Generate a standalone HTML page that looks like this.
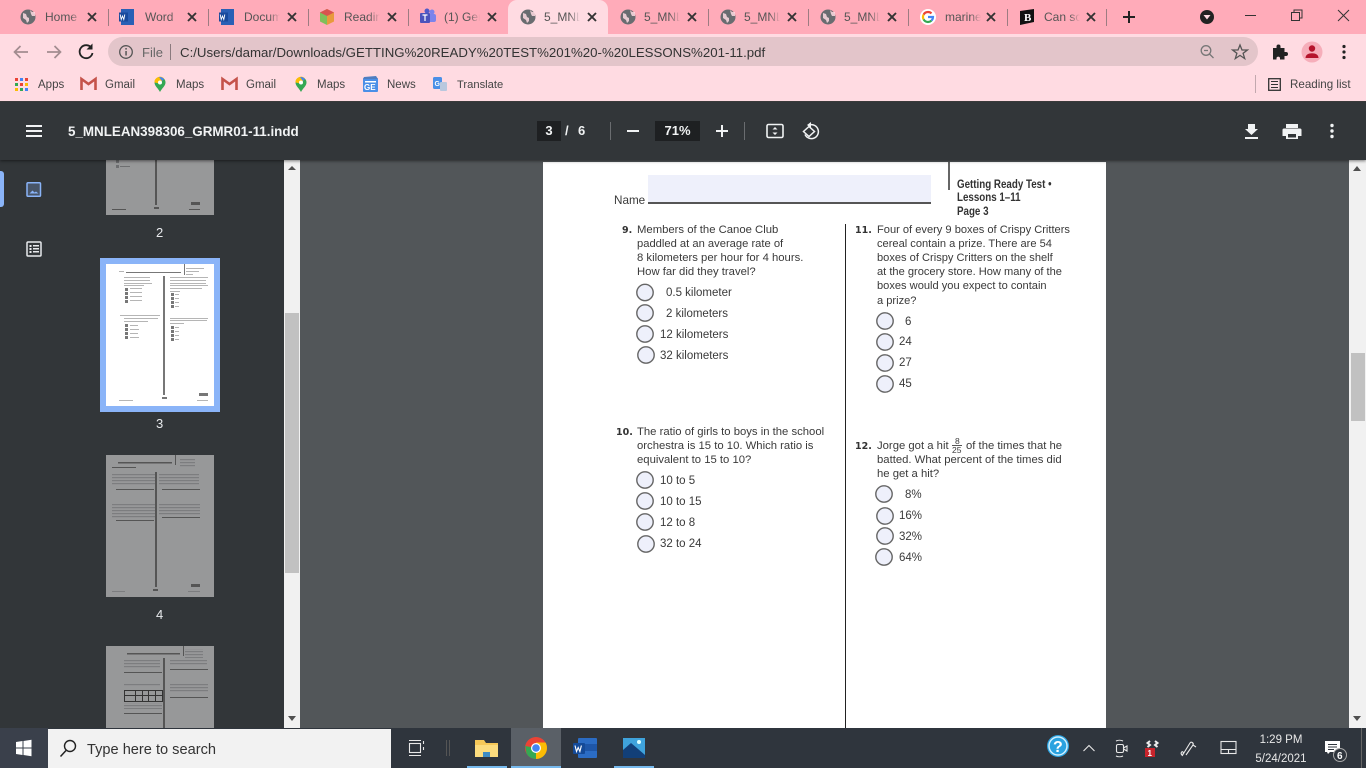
<!DOCTYPE html>
<html><head><meta charset="utf-8"><style>
html,body{margin:0;padding:0;width:1366px;height:768px;overflow:hidden;background:#525659;font-family:"Liberation Sans",sans-serif}
.b{position:absolute}
.t{position:absolute;white-space:nowrap;line-height:14px;height:14px}
.tab{font-size:12px;color:#555;line-height:16px;height:16px;top:9px;width:36px;overflow:hidden;-webkit-mask-image:linear-gradient(90deg,#000 70%,transparent 100%)}
.bm{font-size:11.5px;color:#444;top:78px}
.p{font-size:11.3px;color:#3a3a3a}
.r{font-size:11.1px}
.o{font-size:11.5px}
.h{font-size:11.5px;font-weight:bold;color:#333;transform:scaleX(.85);transform-origin:left}
.n{font-family:"DejaVu Sans",sans-serif;font-weight:bold;font-size:9.5px;color:#333}
svg{position:absolute;overflow:visible}
</style></head><body>
<!-- main page -->
<div class="b" style="left:543px;top:162px;width:563px;height:568px;background:#fff"></div>
<div class="b" style="left:648px;top:175px;width:283px;height:28px;background:#eef0fb"></div>
<div class="b" style="left:648px;top:202px;width:283px;height:1.500px;background:#555"></div>
<div class="b" style="left:948px;top:162px;width:2px;height:28px;background:#666"></div>
<div class="b" style="left:845px;top:224px;width:1px;height:506px;background:#222"></div>
<div class="t p" style="left:614px;top:194px;font-size:11.7px">Name</div>
<div class="t h" style="left:957px;top:178px">Getting Ready Test •</div>
<div class="t h" style="left:957px;top:191px">Lessons 1–11</div>
<div class="t h" style="left:957px;top:205px">Page 3</div>

<div class="t n" style="left:622px;top:224px">9.</div>
<div class="t p" style="left:637px;top:223px">Members of the Canoe Club</div>
<div class="t p" style="left:637px;top:237px;font-size:11.2px">paddled at an average rate of</div>
<div class="t p" style="left:637px;top:251px">8 kilometers per hour for 4 hours.</div>
<div class="t p" style="left:637px;top:265px">How far did they travel?</div>
<div class="t p o" style="left:666px;top:286px">0.5 kilometer</div>
<div class="t p o" style="left:666px;top:307px">2 kilometers</div>
<div class="t p o" style="left:660px;top:328px">12 kilometers</div>
<div class="t p o" style="left:660px;top:349px">32 kilometers</div>

<div class="t n" style="left:855px;top:224px">11.</div>
<div class="t p r" style="left:877px;top:223px">Four of every 9 boxes of Crispy Critters</div>
<div class="t p r" style="left:877px;top:237px">cereal contain a prize. There are 54</div>
<div class="t p r" style="left:877px;top:251px">boxes of Crispy Critters on the shelf</div>
<div class="t p r" style="left:877px;top:265px">at the grocery store. How many of the</div>
<div class="t p r" style="left:877px;top:279px">boxes would you expect to contain</div>
<div class="t p r" style="left:877px;top:294px">a prize?</div>
<div class="t p o" style="left:905px;top:315px">6</div>
<div class="t p o" style="left:899px;top:335px">24</div>
<div class="t p o" style="left:899px;top:356px">27</div>
<div class="t p o" style="left:899px;top:377px">45</div>

<div class="t n" style="left:616px;top:426px">10.</div>
<div class="t p" style="left:637px;top:425px">The ratio of girls to boys in the school</div>
<div class="t p" style="left:637px;top:439px">orchestra is 15 to 10. Which ratio is</div>
<div class="t p" style="left:637px;top:453px">equivalent to 15 to 10?</div>
<div class="t p o" style="left:660px;top:474px">10 to 5</div>
<div class="t p o" style="left:660px;top:495px">10 to 15</div>
<div class="t p o" style="left:660px;top:516px">12 to 8</div>
<div class="t p o" style="left:660px;top:537px">32 to 24</div>

<div class="t n" style="left:855px;top:440px">12.</div>
<div class="t p" style="left:877px;top:439px">Jorge got a hit</div>
<div class="t p" style="left:955px;top:434px;font-size:8.5px">8</div>
<div class="b" style="left:952px;top:445px;width:10px;height:1px;background:#555"></div>
<div class="t p" style="left:952px;top:443px;font-size:8.5px">25</div>
<div class="t p" style="left:966px;top:439px">of the times that he</div>
<div class="t p" style="left:877px;top:453px">batted. What percent of the times did</div>
<div class="t p" style="left:877px;top:467px">he get a hit?</div>
<div class="t p o" style="left:905px;top:488px">8%</div>
<div class="t p o" style="left:899px;top:509px">16%</div>
<div class="t p o" style="left:899px;top:530px">32%</div>
<div class="t p o" style="left:899px;top:551px">64%</div>

<svg style="left:0;top:0" width="1366" height="768" fill="#eef0fb" stroke="#666" stroke-width="1.400">
<circle cx="645" cy="292.500" r="8.200"/><circle cx="645" cy="313" r="8.200"/><circle cx="645" cy="334" r="8.200"/><circle cx="646" cy="355" r="8.200"/>
<circle cx="645" cy="480" r="8.200"/><circle cx="645" cy="501" r="8.200"/><circle cx="645" cy="522" r="8.200"/><circle cx="646" cy="544" r="8.200"/>
<circle cx="885" cy="321" r="8.200"/><circle cx="885" cy="342" r="8.200"/><circle cx="885" cy="363" r="8.200"/><circle cx="885" cy="384" r="8.200"/>
<circle cx="884" cy="494" r="8.200"/><circle cx="885" cy="516" r="8.200"/><circle cx="885" cy="536" r="8.200"/><circle cx="884" cy="557" r="8.200"/>
</svg>

<!-- right scrollbar -->
<div class="b" style="left:1349px;top:160px;width:17px;height:570px;background:#f1f1f1"></div>
<div class="b" style="left:1351px;top:353px;width:14px;height:68px;background:#c1c1c1"></div>
<svg style="left:0;top:0" width="1366" height="768" fill="#505050"><path d="M1353 171l4-5 4 5zM1353 716l4 5 4-5z"/></svg>

<!-- sidebar -->
<div class="b" style="left:0;top:160px;width:284px;height:570px;background:#323639"></div>
<div class="b" style="left:0;top:171px;width:4px;height:36px;background:#8ab4f8;border-radius:0 3px 3px 0"></div>
<div class="b" style="left:284px;top:160px;width:16px;height:570px;background:#f1f1f1"></div>
<div class="b" style="left:285px;top:313px;width:14px;height:260px;background:#c1c1c1"></div>
<svg style="left:0;top:0" width="1366" height="768" fill="#505050"><path d="M288 170l4-4 4 4zM288 716l4 5 4-5z"/></svg>
<div class="b" style="left:106px;top:150px;width:108px;height:65px;background:#979899"></div>
<div class="b" style="left:100px;top:258px;width:108px;height:142px;background:#fff;border:6px solid #8ab4f8"></div>
<div class="b" style="left:106px;top:455px;width:108px;height:142px;background:#979899"></div>
<div class="b" style="left:106px;top:646px;width:108px;height:90px;background:#979899"></div>
<div class="t" style="left:156px;top:226px;font-size:13px;color:#e8eaed">2</div>
<div class="t" style="left:156px;top:417px;font-size:13px;color:#e8eaed">3</div>
<div class="t" style="left:156px;top:608px;font-size:13px;color:#e8eaed">4</div>

<svg style="left:0;top:0" width="1366" height="768">
<defs><pattern id="ln" width="4" height="3" patternUnits="userSpaceOnUse"><rect width="4" height="1.200" fill="#7c7d7f"/></pattern></defs>
<!-- thumb 2 -->
<g fill="#555"><rect x="155" y="160" width="2" height="45"/><rect x="191" y="202" width="9" height="3"/><rect x="112" y="209" width="14" height="1"/><rect x="154" y="207" width="5" height="2"/><rect x="189" y="209" width="11" height="1"/></g>
<g fill="#6d6e70"><rect x="116" y="160" width="3" height="3"/><rect x="116" y="165" width="3" height="3"/><rect x="120" y="166" width="10" height="1"/></g>
<!-- thumb 3 -->
<g fill="#b5b5b5">
<rect x="124" y="277" width="26" height="1"/><rect x="124" y="280" width="26" height="1"/><rect x="124" y="283" width="28" height="1"/><rect x="124" y="285" width="20" height="1"/>
<rect x="130" y="288" width="12" height="1"/><rect x="130" y="292" width="12" height="1"/><rect x="130" y="296" width="12" height="1"/><rect x="130" y="300" width="12" height="1"/>
<rect x="170" y="277" width="38" height="1"/><rect x="170" y="280" width="36" height="1"/><rect x="170" y="283" width="36" height="1"/><rect x="170" y="285" width="38" height="1"/><rect x="170" y="288" width="32" height="1"/><rect x="170" y="291" width="10" height="1"/>
<rect x="175" y="294" width="4" height="1"/><rect x="175" y="298" width="4" height="1"/><rect x="175" y="302" width="4" height="1"/><rect x="175" y="306" width="4" height="1"/>
<rect x="120" y="315" width="40" height="1"/><rect x="124" y="318" width="34" height="1"/><rect x="124" y="321" width="24" height="1"/>
<rect x="130" y="325" width="8" height="1"/><rect x="130" y="329" width="9" height="1"/><rect x="130" y="333" width="8" height="1"/><rect x="130" y="337" width="9" height="1"/>
<rect x="170" y="318" width="38" height="1"/><rect x="170" y="320" width="37" height="1"/><rect x="170" y="323" width="14" height="1"/>
<rect x="175" y="327" width="4" height="1"/><rect x="175" y="331" width="4" height="1"/><rect x="175" y="335" width="4" height="1"/><rect x="175" y="339" width="4" height="1"/>
<rect x="186" y="268" width="18" height="1"/><rect x="186" y="271" width="13" height="1"/><rect x="186" y="274" width="7" height="1"/>
<rect x="119" y="271" width="5" height="1"/><rect x="119" y="400" width="14" height="1"/><rect x="197" y="400" width="11" height="1"/>
</g>
<g fill="#777"><rect x="126" y="272" width="55" height="1"/><rect x="184" y="264" width="1" height="11"/><rect x="163" y="276" width="2" height="119"/><rect x="199" y="393" width="9" height="3"/><rect x="162" y="397" width="5" height="2"/>
<rect x="125" y="288" width="3" height="3"/><rect x="125" y="292" width="3" height="3"/><rect x="125" y="296" width="3" height="3"/><rect x="125" y="300" width="3" height="3"/>
<rect x="171" y="293" width="3" height="3"/><rect x="171" y="297" width="3" height="3"/><rect x="171" y="301" width="3" height="3"/><rect x="171" y="305" width="3" height="3"/>
<rect x="125" y="324" width="3" height="3"/><rect x="125" y="328" width="3" height="3"/><rect x="125" y="332" width="3" height="3"/><rect x="125" y="336" width="3" height="3"/>
<rect x="171" y="326" width="3" height="3"/><rect x="171" y="330" width="3" height="3"/><rect x="171" y="334" width="3" height="3"/><rect x="171" y="338" width="3" height="3"/></g>
<!-- thumb 4 -->
<g fill="url(#ln)">
<rect x="112" y="473" width="43" height="12"/><rect x="159" y="473" width="40" height="12"/>
<rect x="112" y="503" width="43" height="15"/><rect x="159" y="503" width="41" height="12"/>
<rect x="180" y="458" width="15" height="9"/>
<rect x="112" y="591" width="13" height="1"/><rect x="188" y="591" width="12" height="1"/>
</g>
<g fill="#555"><rect x="118" y="462" width="54" height="1.500"/><rect x="175" y="455" width="1" height="10"/><rect x="112" y="467" width="24" height="1"/><rect x="116" y="489" width="38" height="1"/><rect x="162" y="489" width="38" height="1"/><rect x="116" y="520" width="38" height="1"/><rect x="162" y="517" width="38" height="1"/><rect x="155" y="472" width="2" height="115"/><rect x="191" y="584" width="9" height="3"/><rect x="153" y="589" width="5" height="2"/></g>
<!-- thumb 5 -->
<g fill="url(#ln)"><rect x="124" y="660" width="36" height="9"/><rect x="170" y="660" width="37" height="6"/><rect x="124" y="684" width="36" height="3"/><rect x="170" y="684" width="38" height="9"/><rect x="124" y="703" width="38" height="6"/><rect x="185" y="649" width="18" height="9"/></g>
<g fill="#555"><rect x="127" y="653" width="53" height="1.500"/><rect x="183" y="646" width="1" height="10"/><rect x="124" y="672" width="38" height="1"/><rect x="170" y="669" width="38" height="1"/><rect x="124" y="713" width="38" height="1"/><rect x="170" y="697" width="38" height="1"/><rect x="163" y="658" width="2" height="70"/></g>
<g fill="none" stroke="#333"><rect x="124.500" y="690.500" width="38" height="11"/><path d="M135.500 690v11M142.500 690v11M148.500 690v11M155.500 690v11M124 695.500h39"/></g>
<!-- sidebar icons -->
<g fill="none" stroke="#8ab4f8" stroke-width="1.500"><rect x="27" y="182.700" width="13.500" height="13.500" rx="1"/></g>
<path d="M29.500 193.500l3-3 2 2 1.500-1 2.500 2z" fill="#8ab4f8"/><rect x="27" y="183" width="13.500" height="13" fill="#8ab4f8" opacity=".25"/>
<g fill="none" stroke="#e8eaed" stroke-width="1.500"><rect x="27" y="242" width="14" height="14" rx="1"/></g>
<g fill="#e8eaed"><rect x="29.500" y="245" width="2" height="2"/><rect x="29.500" y="248" width="2" height="2"/><rect x="29.500" y="251" width="2" height="2"/><rect x="33" y="245" width="6" height="1.500"/><rect x="33" y="248" width="6" height="1.500"/><rect x="33" y="251" width="6" height="1.500"/></g>
</svg>

<!-- PDF toolbar -->
<div class="b" style="left:0;top:102px;width:1366px;height:58px;background:#323639;box-shadow:0 1px 3px rgba(0,0,0,.5)"></div>
<svg style="left:0;top:0" width="1366" height="768">
<g fill="#f1f3f4"><rect x="26" y="125" width="16" height="2"/><rect x="26" y="130" width="16" height="2"/><rect x="26" y="135" width="16" height="2"/></g>
<g fill="#6a6d70"><rect x="610" y="122" width="1" height="18"/><rect x="744" y="122" width="1" height="18"/></g>
<g fill="#f1f3f4"><rect x="627" y="130" width="12" height="2"/><rect x="716" y="130" width="12" height="2"/><rect x="721" y="125" width="2" height="12"/></g>
<rect x="767" y="124.500" width="16" height="13" rx="1.500" fill="none" stroke="#f1f3f4" stroke-width="1.600"/>
<path d="M775 127l-2.500 2.500h5zM775 135l-2.500-2.500h5z" fill="#f1f3f4"/>
<path d="M808 125.500a7 7 0 1 1-3 9" fill="none" stroke="#f1f3f4" stroke-width="1.500"/><path d="M811 122v6l-4-3z" fill="#f1f3f4"/>
<path d="M809 126.500l-5.500 5 5.500 5 5.500-5z" fill="#323639" stroke="#f1f3f4" stroke-width="1.500"/>
<path d="M1248 124h7v5h3l-6.500 6-6.500-6h3zM1245 137h13v2h-13z" fill="#f1f3f4"/>
<path d="M1286 124h12v4h-12zM1284 128.500h16a1.500 1.500 0 0 1 1.500 1.500v6h-3.500v3h-12v-3h-3.500v-6a1.500 1.500 0 0 1 1.500-1.500z" fill="#f1f3f4"/><rect x="1288" y="134" width="8" height="3.500" fill="#323639"/>
<g fill="#f1f3f4"><circle cx="1332" cy="125.500" r="1.700"/><circle cx="1332" cy="131" r="1.700"/><circle cx="1332" cy="136.500" r="1.700"/></g>
</svg>
<div class="t" style="left:68px;top:125px;font-size:13.4px;font-weight:bold;color:#f1f3f4">5_MNLEAN398306_GRMR01-11.indd</div>
<div class="b" style="left:537px;top:121px;width:24px;height:20px;background:#1e2022;color:#f1f3f4;font-size:13px;line-height:20px;text-align:center;font-weight:bold">3</div>
<div class="t" style="left:565px;top:124px;font-size:13px;color:#f1f3f4;font-weight:bold">/</div>
<div class="t" style="left:578px;top:124px;font-size:13px;color:#f1f3f4;font-weight:bold">6</div>
<div class="b" style="left:655px;top:121px;width:45px;height:20px;background:#1e2022;color:#f1f3f4;font-size:13px;line-height:20px;text-align:center;font-weight:bold">71%</div>

<!-- Chrome top -->
<div class="b" style="left:0;top:0;width:1366px;height:34px;background:#ffabb9"></div>
<div class="b" style="left:0;top:34px;width:1366px;height:67px;background:#ffdbe2"></div>
<div class="b" style="left:0;top:101px;width:1366px;height:1px;background:#3a3a3a"></div>
<div class="b" style="left:508px;top:0;width:100px;height:34px;background:#ffdbe2;border-radius:9px 9px 0 0"></div>
<div class="b" style="left:108px;top:37px;width:1150px;height:29px;background:#e3c5ca;border-radius:15px"></div>

<div class="t tab" style="left:45px">Home</div>
<div class="t tab" style="left:145px">Word</div>
<div class="t tab" style="left:244px">Document</div>
<div class="t tab" style="left:344px">Reading</div>
<div class="t tab" style="left:444px">(1) General</div>
<div class="t tab" style="left:544px">5_MNLEAN</div>
<div class="t tab" style="left:644px">5_MNLEAN</div>
<div class="t tab" style="left:744px">5_MNLEAN</div>
<div class="t tab" style="left:844px">5_MNLEAN</div>
<div class="t tab" style="left:945px">marine</div>
<div class="t tab" style="left:1044px">Can sc</div>

<svg style="left:0;top:0" width="1366" height="101">
<defs>
<g id="gl"><circle r="7.500" fill="#696c70"/><path d="M-5 -4l3 1 1 3 2 1v3l-2 2-1-3-3-2zM2-7l2 2 3 0 0 4-3 0-1-2z" fill="#ffdbe2" opacity=".85"/></g>
<path id="cl" d="M-4-4L4 4M4-4L-4 4" stroke="#333" stroke-width="1.900" fill="none"/>
<g id="wd"><rect x="-6" y="-8" width="13" height="16" fill="#2a5fb5"/><rect x="-8" y="-4.500" width="9" height="9" fill="#1a4a9c"/><path d="M-6.800-2.500l1 5 1.300-3.500 1.300 3.500 1-5" stroke="#fff" stroke-width=".9" fill="none"/></g>
<g id="ms"><path d="M-7 6v-11l7 5 7-5v11" fill="none" stroke="#c5524a" stroke-width="2.600"/></g>
<g id="pn"><path d="M0 8c-2-4-5.500-6-5.500-9.500a5.500 5.500 0 0 1 11 0c0 3.500-3.500 5.500-5.500 9.500z" fill="#34a853"/><path d="M-5.500-1.500a5.500 5.500 0 0 1 9.500-4l-4 5z" fill="#fbbc04"/><circle cy="-1.500" r="2" fill="#fff"/><path d="M-1-7a5.500 5.500 0 0 1 5 2l-2 2z" fill="#4285f4"/></g>
</defs>
<g fill="#9d7c82"><rect x="108" y="9" width="1" height="17"/><rect x="208" y="9" width="1" height="17"/><rect x="308" y="9" width="1" height="17"/><rect x="408" y="9" width="1" height="17"/><rect x="708" y="9" width="1" height="17"/><rect x="808" y="9" width="1" height="17"/><rect x="908" y="9" width="1" height="17"/><rect x="1007" y="9" width="1" height="17"/><rect x="1106" y="9" width="1" height="17"/></g>
<use href="#gl" x="28" y="17"/><use href="#gl" x="528" y="17"/><use href="#gl" x="628" y="17"/><use href="#gl" x="728" y="17"/><use href="#gl" x="828" y="17"/>
<use href="#wd" x="127" y="17"/><use href="#wd" x="227" y="17"/>
<g transform="translate(327,17)"><path d="M0-8l7 3.500v9L0 8z" fill="#e89a3c"/><path d="M0-8l-7 3.500v9L0 8z" fill="#7fbf5a"/><path d="M0-8l7 3.500L0-1-7-4.500z" fill="#d9534f"/></g>
<g transform="translate(428,17)"><circle cx="4" cy="-5" r="2.500" fill="#7b83eb"/><rect x="-1" y="-3" width="9" height="8" rx="2" fill="#7b83eb"/><circle cx="-1" cy="-6" r="2.500" fill="#5059c9"/><rect x="-8" y="-4" width="10" height="10" rx="1" fill="#4b53bc"/><path d="M-5.500-2h5M-3 -2v6" stroke="#fff" stroke-width="1.200"/></g>
<g transform="translate(928,17)"><circle r="8" fill="#fff"/><path d="M0-5a5 5 0 0 1 3.500 1.400" fill="none" stroke="#ea4335" stroke-width="2.200"/><path d="M-4.400-2.400A5 5 0 0 1 0-5" fill="none" stroke="#ea4335" stroke-width="2.200"/><path d="M-4.400 2.400a5 5 0 0 1 0-4.800" fill="none" stroke="#fbbc05" stroke-width="2.200"/><path d="M3.500 3.500a5 5 0 0 1-7.900-1.100" fill="none" stroke="#34a853" stroke-width="2.200"/><path d="M0 0h5a5 5 0 0 1-1.500 3.500" fill="none" stroke="#4285f4" stroke-width="2.200"/></g>
<path d="M1020 11l14-2v13l-14 3z" fill="#111"/><text x="1024" y="21" font-family="Liberation Serif" font-weight="bold" font-size="11" fill="#fff">B</text>
<use href="#cl" x="92" y="17"/><use href="#cl" x="192" y="17"/><use href="#cl" x="292" y="17"/><use href="#cl" x="392" y="17"/><use href="#cl" x="492" y="17"/><use href="#cl" x="592" y="17"/><use href="#cl" x="692" y="17"/><use href="#cl" x="792" y="17"/><use href="#cl" x="892" y="17"/><use href="#cl" x="991" y="17"/><use href="#cl" x="1091" y="17"/>
<path d="M1129 11v12M1123 17h12" stroke="#222" stroke-width="2"/>
<circle cx="1207" cy="17" r="7" fill="#222"/><path d="M1203.500 15h7l-3.500 4.500z" fill="#ffdbe2"/>
<path d="M1245 15.500h11" stroke="#333"/>
<rect x="1291.500" y="12.500" width="8" height="8" fill="none" stroke="#333"/><path d="M1294 12.500v-2.500h8v8h-2.500" fill="none" stroke="#333"/>
<path d="M1338 10l11 11M1349 10l-11 11" stroke="#333"/>
<!-- toolbar -->
<path d="M28 52H15M20.500 46L14.500 52l6 6" fill="none" stroke="#a28c90" stroke-width="1.700"/>
<path d="M47 52h13M54.500 46l6 6-6 6" fill="none" stroke="#a28c90" stroke-width="1.700"/>
<path d="M91.500 48a6.500 6.500 0 1 0 1 5" fill="none" stroke="#222" stroke-width="1.800"/><path d="M92.500 43.500v6h-6z" fill="#222"/>
<circle cx="126" cy="52" r="6.300" fill="none" stroke="#555" stroke-width="1.300"/><rect x="125.300" y="51" width="1.500" height="4.500" fill="#555"/><rect x="125.300" y="48" width="1.500" height="1.600" fill="#555"/>
<rect x="170" y="44" width="1" height="16" fill="#8a7a7e"/>
<circle cx="1206" cy="50.500" r="4.800" fill="none" stroke="#777" stroke-width="1.300"/><path d="M1209.500 54l4 4M1204 50.500h4" stroke="#777" stroke-width="1.300"/>
<path d="M1240 45l2 5h5.400l-4.300 3.300 1.600 5.300-4.700-3.200-4.700 3.200 1.600-5.300-4.300-3.300h5.400z" fill="none" stroke="#555" stroke-width="1.300"/>
<path d="M1273 49h3.500v-1.500a2 2 0 0 1 4 0V49h4v4h1.500a2 2 0 0 1 0 4h-1.500v3.500h-4.500V59a1.800 1.800 0 0 0-3.500 0v1.500h-3.500z" fill="#222" transform="translate(0,-1)"/>
<circle cx="1312" cy="52" r="10.500" fill="#f6aeba"/><circle cx="1312" cy="48.500" r="3.200" fill="#b5142c"/><path d="M1305.500 58c0-3.500 3-4.800 6.500-4.800s6.500 1.300 6.500 4.800z" fill="#b5142c"/>
<g fill="#222"><circle cx="1344" cy="46.500" r="1.600"/><circle cx="1344" cy="52" r="1.600"/><circle cx="1344" cy="57.500" r="1.600"/></g>
<!-- bookmarks -->
<g><rect x="15" y="78" width="3" height="3" fill="#ea4335"/><rect x="20" y="78" width="3" height="3" fill="#4285f4"/><rect x="25" y="78" width="3" height="3" fill="#ea4335"/><rect x="15" y="83" width="3" height="3" fill="#34a853"/><rect x="20" y="83" width="3" height="3" fill="#ea4335"/><rect x="25" y="83" width="3" height="3" fill="#fbbc05"/><rect x="15" y="88" width="3" height="3" fill="#fbbc05"/><rect x="20" y="88" width="3" height="3" fill="#34a853"/><rect x="25" y="88" width="3" height="3" fill="#4285f4"/></g>
<use href="#ms" x="88.500" y="84"/><use href="#ms" x="229.500" y="84"/>
<use href="#pn" x="160" y="84"/><use href="#pn" x="301" y="84"/>
<g transform="translate(371,84)"><rect x="-8" y="-6" width="15" height="14" rx="1" fill="#4a8fe7"/><path d="M-7-7l12-1 2 3H-8z" fill="#4f7dc0"/><rect x="-6" y="-3" width="11" height="1.500" fill="#fff"/><text x="-7" y="6" font-size="8" font-weight="bold" fill="#fff" font-family="Liberation Sans">GE</text></g>
<g transform="translate(440,84)"><rect x="-7" y="-7" width="9" height="12" rx="1.500" fill="#4a8fe7"/><rect x="0" y="-2" width="7" height="9" rx="1" fill="#b9c8de"/><text x="-5.500" y="2" font-size="7" font-weight="bold" fill="#fff" font-family="Liberation Sans">G</text></g>
<rect x="1255" y="75" width="1" height="18" fill="#c2a8ae"/>
<rect x="1268.700" y="78.700" width="11.600" height="11.600" fill="none" stroke="#333" stroke-width="1.300"/>
<path d="M1271 81.500h7M1271 84.500h7M1271 87.500h7" stroke="#333" stroke-width="1"/>
</svg>
<div class="t" style="left:180px;top:46px;font-size:13.25px;color:#333">C:/Users/damar/Downloads/GETTING%20READY%20TEST%201%20-%20LESSONS%201-11.pdf</div>
<div class="t" style="left:142px;top:46px;font-size:13px;color:#666">File</div>
<div class="t bm" style="left:38px">Apps</div>
<div class="t bm" style="left:105px">Gmail</div>
<div class="t bm" style="left:176px">Maps</div>
<div class="t bm" style="left:246px">Gmail</div>
<div class="t bm" style="left:317px">Maps</div>
<div class="t bm" style="left:387px">News</div>
<div class="t bm" style="left:457px;font-size:11.2px">Translate</div>
<div class="t bm" style="left:1290px;font-size:11.6px">Reading list</div>

<!-- taskbar -->
<div class="b" style="left:0;top:728px;width:1366px;height:40px;background:#2f353d"></div>
<div class="b" style="left:0;top:728px;width:48px;height:40px;background:#3a404b"></div>
<div class="b" style="left:48px;top:729px;width:343px;height:39px;background:#f2f2f2"></div>
<div class="b" style="left:511px;top:728px;width:50px;height:40px;background:#5a6067"></div>
<div class="b" style="left:467px;top:766px;width:40px;height:2px;background:#76b9ed"></div>
<div class="b" style="left:511px;top:766px;width:50px;height:2px;background:#76b9ed"></div>
<div class="b" style="left:614px;top:766px;width:40px;height:2px;background:#76b9ed"></div>
<div class="t" style="left:87px;top:743px;font-size:14.6px;color:#333">Type here to search</div>
<div class="t" style="left:1259px;top:733px;font-size:11.5px;color:#e8e8e8;width:44px;text-align:center">1:29 PM</div>
<div class="t" style="left:1254px;top:752px;font-size:11.5px;color:#e8e8e8;width:54px;text-align:center">5/24/2021</div>
<svg style="left:0;top:0" width="1366" height="768">
<path d="M16 742l6.500-1v6.500H16zM23.500 741l8-1.200v7.700h-8zM16 748.500h6.500v6.500L16 754zM23.500 748.500h8v7.700l-8-1.200z" fill="#fff"/>
<circle cx="70" cy="746" r="5.500" fill="none" stroke="#222" stroke-width="1.400"/><path d="M66 750.500l-5.500 6" stroke="#222" stroke-width="1.500"/>
<g fill="none" stroke="#e8e8e8" stroke-width="1.100"><rect x="409.500" y="743.500" width="11" height="9"/><path d="M409 740.500h12M409 755.500h12M423.500 741v3M423.500 747v3"/></g>
<rect x="446" y="740" width="1" height="16" fill="#555"/><rect x="449" y="740" width="1" height="16" fill="#555"/>
<path d="M475 740h9l2 3h12v14h-23z" fill="#f6c858"/><rect x="475" y="745" width="23" height="12" fill="#fcdc7e"/><rect x="483" y="752" width="7" height="5" fill="#3d8bc4"/>
<circle cx="536" cy="748" r="11" fill="#ea4335"/><path d="M536 748l9.500 5.500A11 11 0 0 1 536 759a11 11 0 0 1-9.500-5.500l-1.300-7.500z" fill="#34a853" opacity="1"/><path d="M536 759a11 11 0 0 0 9.500-16.500H536z" fill="#fbbc05"/><circle cx="536" cy="748" r="5" fill="#fff"/><circle cx="536" cy="748" r="3.800" fill="#4285f4"/>
<rect x="578" y="738" width="19" height="20" rx="1" fill="#2b6cc4"/><rect x="578" y="744" width="19" height="7" fill="#1e56a8"/><rect x="573" y="743" width="12" height="11" rx="1" fill="#144a98"/><path d="M575 745.500l1.500 6 1.700-4 1.700 4 1.500-6" fill="none" stroke="#fff" stroke-width="1.100"/>
<rect x="623" y="738" width="22" height="20" fill="#3fa3dc"/><path d="M623 758v-8l8-7 14 12v3z" fill="#123f78"/><circle cx="639" cy="742" r="2" fill="#dff"/>
<circle cx="1058" cy="746" r="11" fill="#2aa2e0"/><circle cx="1058" cy="746" r="9" fill="none" stroke="#cfefff" stroke-width="1.500"/>
<text x="1053" y="752" font-family="Liberation Sans" font-weight="bold" font-size="16" fill="#fff">?</text>
<path d="M1083.500 751l5.500-5.500 5.500 5.500" fill="none" stroke="#e8e8e8" stroke-width="1.100"/>
<g fill="none" stroke="#e8e8e8" stroke-width="1.100"><rect x="1116.500" y="744.500" width="7" height="8" rx="1.500"/><path d="M1123.500 748l3.500-2v5l-3.500-2M1116 741c2-1 5-1 7 0M1116 756c2 1 5 1 7 0"/></g>
<path d="M1150 741l-2.500 2 2.500 2-2.500 2M1155 741l2.500 2-2.500 2 2.500 2" stroke="#eee" stroke-width="2" fill="none"/><rect x="1145" y="748" width="10" height="9" fill="#c8242c"/><text x="1147.500" y="756" font-size="8" font-weight="bold" fill="#fff" font-family="Liberation Sans">1</text>
<path d="M1182 755c-2-2 0-4 1-3s-1 4-1 4l8-13c1-2 4 0 3 2l-7 10M1193 745l3 2" fill="none" stroke="#e8e8e8" stroke-width="1.100"/>
<g fill="none" stroke="#e8e8e8" stroke-width="1.100"><rect x="1221" y="741.500" width="15" height="12"/><path d="M1221 749.500h15M1228.500 749.500v4"/></g>
<path d="M1325 741h15v11h-10l-2 2-1-2h-2z" fill="#fff"/><path d="M1328 744.500h9M1328 747h9M1328 749.500h6" stroke="#2f353d"/><circle cx="1340" cy="755" r="6.500" fill="#2f353d" stroke="#aaa"/>
<text x="1337" y="759" font-size="10" font-weight="bold" fill="#fff" font-family="Liberation Sans">6</text>
<rect x="1361" y="728" width="1" height="40" fill="#666"/>
</svg>
</body></html>
